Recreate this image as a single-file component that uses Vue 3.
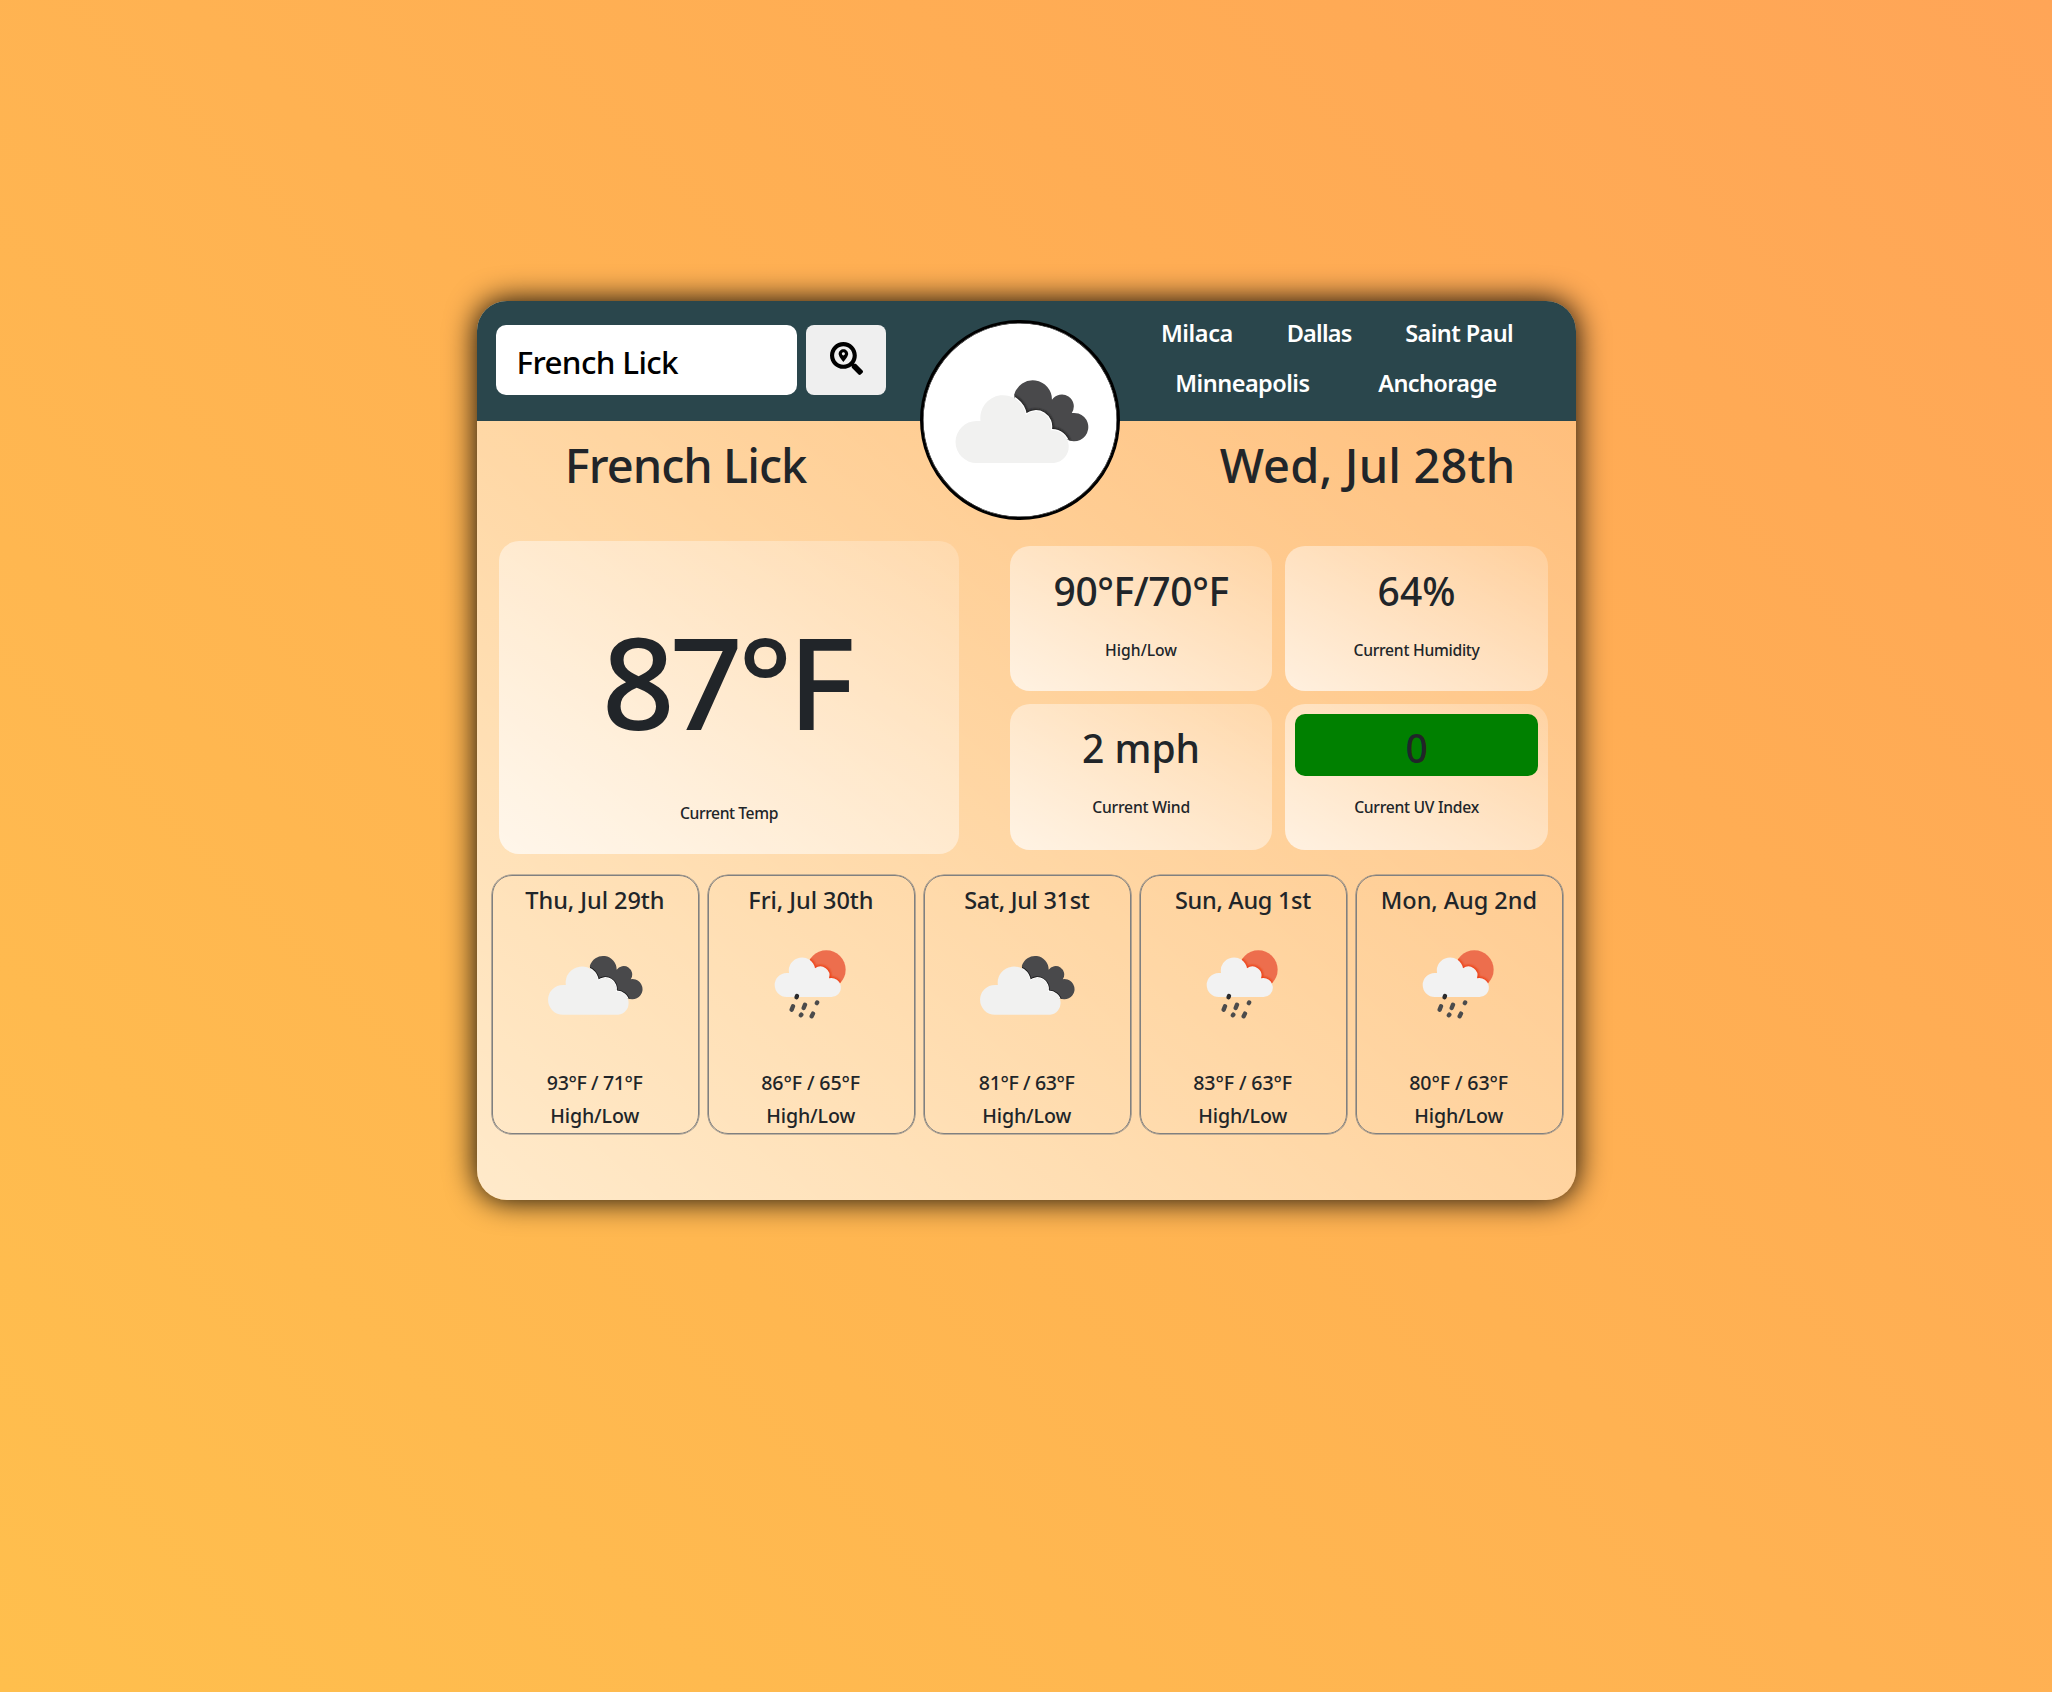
<script setup>
const cities = [
  [{ name: 'Milaca', cls: 'milaca' }, { name: 'Dallas', cls: 'dallas' }, { name: 'Saint Paul', cls: 'saint-paul' }],
  [{ name: 'Minneapolis', cls: 'minneapolis' }, { name: 'Anchorage', cls: 'anchorage' }]
]
const stats = [
  { value: '90°F/70°F', label: 'High/Low', cls: 'range' },
  { value: '64%', label: 'Current Humidity', cls: 'humidity' },
  { value: '2 mph', label: 'Current Wind', cls: 'wind' },
  { value: '0', label: 'Current UV Index', cls: 'uv' }
]
const forecast = [
  { day: 'Thu, Jul 29th', icon: 'clouds', temps: '93°F / 71°F', cls: 'narrow' },
  { day: 'Fri, Jul 30th', icon: 'rain', temps: '86°F / 65°F' },
  { day: 'Sat, Jul 31st', icon: 'clouds', temps: '81°F / 63°F', cls: 'narrow first' },
  { day: 'Sun, Aug 1st', icon: 'rain', temps: '83°F / 63°F', cls: 'first' },
  { day: 'Mon, Aug 2nd', icon: 'rain', temps: '80°F / 63°F' }
]
</script>

<template>
  <div class="page">
    <svg class="defs" width="0" height="0" aria-hidden="true">
      <defs>
        <path id="dark-cloud" d="M342 282A58 58 0 0 1 456 298A36 36 0 0 1 516 338A43 43 0 1 1 502 418L440 440L350 350Z" />
        <path id="light-cloud" d="M228 489A63.5 63.5 0 0 1 228 362L240 362A69 69 0 1 1 377 344A46 46 0 0 1 452 390A49.5 49.5 0 1 1 462 489Z" />
        <clipPath id="dark-clip"><use href="#dark-cloud" /></clipPath>
        <filter id="soft" x="-20%" y="-20%" width="140%" height="140%"><feGaussianBlur stdDeviation="3" /></filter>
        <symbol id="clouds" viewBox="160 235 410 260">
          <use href="#dark-cloud" fill="#49494b" />
          <g clip-path="url(#dark-clip)">
            <use href="#light-cloud" fill="none" stroke="#1d1d1f" stroke-width="14" filter="url(#soft)" />
            <use href="#light-cloud" fill="none" stroke="#fff" stroke-width="7" />
          </g>
          <use href="#light-cloud" fill="#f1f1f0" />
        </symbol>
        <clipPath id="sun-clip"><circle cx="1040" cy="330" r="58" /></clipPath>
        <path id="rain-cloud" d="M921 412A36 36 0 0 1 921 340L928 340A39.5 39.5 0 1 1 1006 326A27 27 0 0 1 1048 356A28.5 28.5 0 1 1 1053 412Z" />
        <symbol id="rain" viewBox="880 265 225 220">
          <circle cx="1040" cy="330" r="58" fill="#ed6e4d" />
          <g clip-path="url(#sun-clip)">
            <use href="#rain-cloud" fill="none" stroke="#ee3d12" stroke-width="8" filter="url(#soft)" />
          </g>
          <use href="#rain-cloud" fill="#f2f2f2" />
          <g stroke="#4b4b4c" stroke-width="13" stroke-linecap="round">
            <path d="M952 409L950.500 413" stroke="#2b2b2c" />
            <path d="M940 440L936 450M976 435L972 445M1012.500 428.500L1011.500 430.500M965 465L963.500 467M1000 462L996 470" />
          </g>
        </symbol>
      </defs>
    </svg>

    <main class="card">
      <header class="topbar">
        <form class="search" @submit.prevent>
          <div class="field">French Lick</div>
          <button type="submit" class="go" aria-label="Search">
            <svg viewBox="0 0 512 512" width="33" height="33" fill="#000"><path d="M505.040 442.660l-99.710-99.690c-4.500-4.500-10.600-7-17-7h-16.300c27.600-35.300 44-79.690 44-127.990C416.030 93.090 322.920 0 208.020 0S0 93.090 0 207.980s93.110 207.980 208.020 207.980c48.300 0 92.710-16.400 128.010-44v16.300c0 6.400 2.500 12.500 7 17l99.710 99.690c9.400 9.400 24.600 9.400 33.900 0l28.300-28.300c9.400-9.400 9.400-24.590.1-33.990zm-297.020-90.700c-79.540 0-144-64.340-144-143.980 0-79.530 64.350-143.980 144-143.980 79.540 0 144 64.340 144 143.980 0 79.530-64.350 143.980-144 143.980zm.02-239.960c-40.780 0-73.840 33.050-73.840 73.830 0 32.960 48.260 93.050 66.750 114.860a9.240 9.240 0 0 0 14.180 0c18.490-21.810 66.750-81.890 66.750-114.860 0-40.780-33.060-73.830-73.840-73.830zm0 96c-13.260 0-24-10.750-24-24 0-13.260 10.750-24 24-24s24 10.740 24 24c0 13.250-10.750 24-24 24z" /></svg>
          </button>
        </form>
        <nav class="cities">
          <div v-for="(row, i) in cities" :key="i" class="city-row">
            <a v-for="c in row" :key="c.name" :class="c.cls">{{ c.name }}</a>
          </div>
        </nav>
      </header>

      <div class="badge"><svg><use href="#clouds" /></svg></div>

      <section class="headline">
        <h1 class="place">French Lick</h1>
        <h1 class="date">Wed, Jul 28th</h1>
      </section>

      <section class="current">
        <div class="panel temp">
          <div class="big">87°F</div>
          <div class="label">Current Temp</div>
        </div>
        <div class="stats">
          <div v-for="s in stats" :key="s.label" class="panel stat" :class="s.cls">
            <div class="value">{{ s.value }}</div>
            <div class="label">{{ s.label }}</div>
          </div>
        </div>
      </section>

      <section class="forecast">
        <article v-for="d in forecast" :key="d.day" class="day" :class="d.cls">
          <h2>{{ d.day }}</h2>
          <div class="pic"><svg :class="d.icon"><use :href="'#' + d.icon" /></svg></div>
          <p class="temps">{{ d.temps }}</p>
          <p class="hl">High/Low</p>
        </article>
      </section>
    </main>
  </div>
</template>

<style>
body { margin: 0; }
</style>

<style scoped>
.page {
  box-sizing: border-box;
  min-height: 1692px;
  padding: 300.6px 0 0 476.6px;
  background: linear-gradient(45deg, #ffbf4d, #ffa557);
  font-family: "Segoe UI", "Noto Sans", "Open Sans", sans-serif;
  font-weight: 500;
  color: #212529;
}
.defs { position: absolute; }
.card {
  position: relative;
  width: 1099.4px;
  height: 899.6px;
  border-radius: 30px;
  overflow: hidden;
  background: linear-gradient(to right top, rgba(255, 255, 255, .7), rgba(255, 255, 255, .2));
  box-shadow: 0 0 31px #000;
}
.topbar {
  height: 120px;
  background: #2a464c;
  display: flex;
  justify-content: space-between;
}
.search { display: flex; gap: 9px; padding: 24px 0 0 19.4px; }
.field {
  box-sizing: border-box;
  width: 301px;
  height: 70.5px;
  border-radius: 10px;
  padding-left: 20.5px;
  background: #fff;
  color: #000;
  font-size: 31.4px;
  line-height: 74px;
  letter-spacing: -.62px;
}
.go {
  width: 80.4px;
  height: 70.5px;
  padding: 0 0 2px 1px;
  border: 0;
  border-radius: 8px;
  background: #efefef;
  display: flex;
  align-items: center;
  justify-content: center;
}
.cities {
  width: 404px;
  padding: 7px 37px 0 0;
  font-size: 23.5px;
  font-weight: 600;
  line-height: 50px;
  color: #fff;
}
.city-row { display: flex; justify-content: space-around; }
.city-row:first-child { margin: 0 -1px 0 -1px; }
.city-row:last-child { padding: 0 8px 0 6px; }
.milaca { letter-spacing: -.4px; }
.dallas { letter-spacing: -.8px; }
.saint-paul { letter-spacing: -.6px; }
.minneapolis { letter-spacing: -.53px; }
.anchorage { letter-spacing: -.62px; }
.badge {
  position: absolute;
  left: 443.4px;
  top: 19.4px;
  box-sizing: border-box;
  width: 200px;
  height: 200px;
  border: 3px solid #000;
  box-shadow: inset 0 0 0 .5px #000;
  border-radius: 50%;
  background: #fff;
}
.badge svg { display: block; width: 135.7px; height: 86px; margin: 55.7px 0 0 31px; }
.headline {
  display: flex;
  justify-content: space-between;
  padding-top: 9px;
}
.headline h1 {
  margin: 0;
  width: 418px;
  text-align: center;
  font-size: 47px;
  font-weight: 500;
  line-height: 70px;
}
.headline .place { letter-spacing: -.96px; }
.headline .date { letter-spacing: .15px; padding-left: 1px; width: 417px; }
.current {
  display: flex;
  justify-content: space-between;
  padding: 41.400px 28.200px 0 22.400px;
}
.panel {
  box-sizing: border-box;
  border-radius: 20px;
  text-align: center;
  background: linear-gradient(to right top, rgba(255, 255, 255, .7), rgba(255, 255, 255, .2));
}
.label { font-size: 15.700px; line-height: 24px; letter-spacing: -.28px; }
.temp { width: 460px; height: 313px; padding-top: 58px; }
.big { font-size: 128px; line-height: 164px; letter-spacing: -5px; padding-right: 6px; }
.temp .label { margin-top: 38px; letter-spacing: -.42px; }
.stats {
  display: grid;
  grid-template-columns: 262.500px 262.500px;
  grid-auto-rows: 145.600px;
  gap: 13px;
  padding-top: 4.700px;
}
.stat { padding: 9.300px 9.500px 0; }
.value { font-size: 39px; line-height: 56px; padding-top: 6px; border-radius: 10px; }
.range .value { letter-spacing: -.4px; }
.range .value, .humidity .value { padding-top: 7.600px; }
.range .label { letter-spacing: 0; }
.wind .label { letter-spacing: -.2px; }
.stat .label { margin-top: 19.700px; }
.uv .value { background: #008000; }
.forecast {
  display: flex;
  justify-content: space-between;
  padding: 21.400px 12.800px 0 15px;
}
.day {
  box-sizing: border-box;
  width: 207.600px;
  height: 258.600px;
  border: 1px solid #808080;
  box-shadow: 0 0 0 .6px #808080;
  border-radius: 20px;
  text-align: center;
}
.day h2 { margin: 0 1px 0 0; padding-top: 8px; font-size: 23.500px; font-weight: 500; line-height: 32px; letter-spacing: -.05px; }
.day.first h2 { letter-spacing: -.3px; }
.pic { height: 150px; padding-top: 32px; box-sizing: border-box; }
.pic svg { display: block; }
.pic .clouds { width: 96.500px; height: 61.200px; margin: 6.800px 0 0 54.500px; }
.pic .rain { width: 75px; height: 73.300px; margin: 0 0 0 64px; }
.day p { margin: 0 1.500px 0 0; font-size: 19.600px; line-height: 33px; letter-spacing: -.1px; }
.day.narrow .temps { letter-spacing: -.4px; }
</style>
